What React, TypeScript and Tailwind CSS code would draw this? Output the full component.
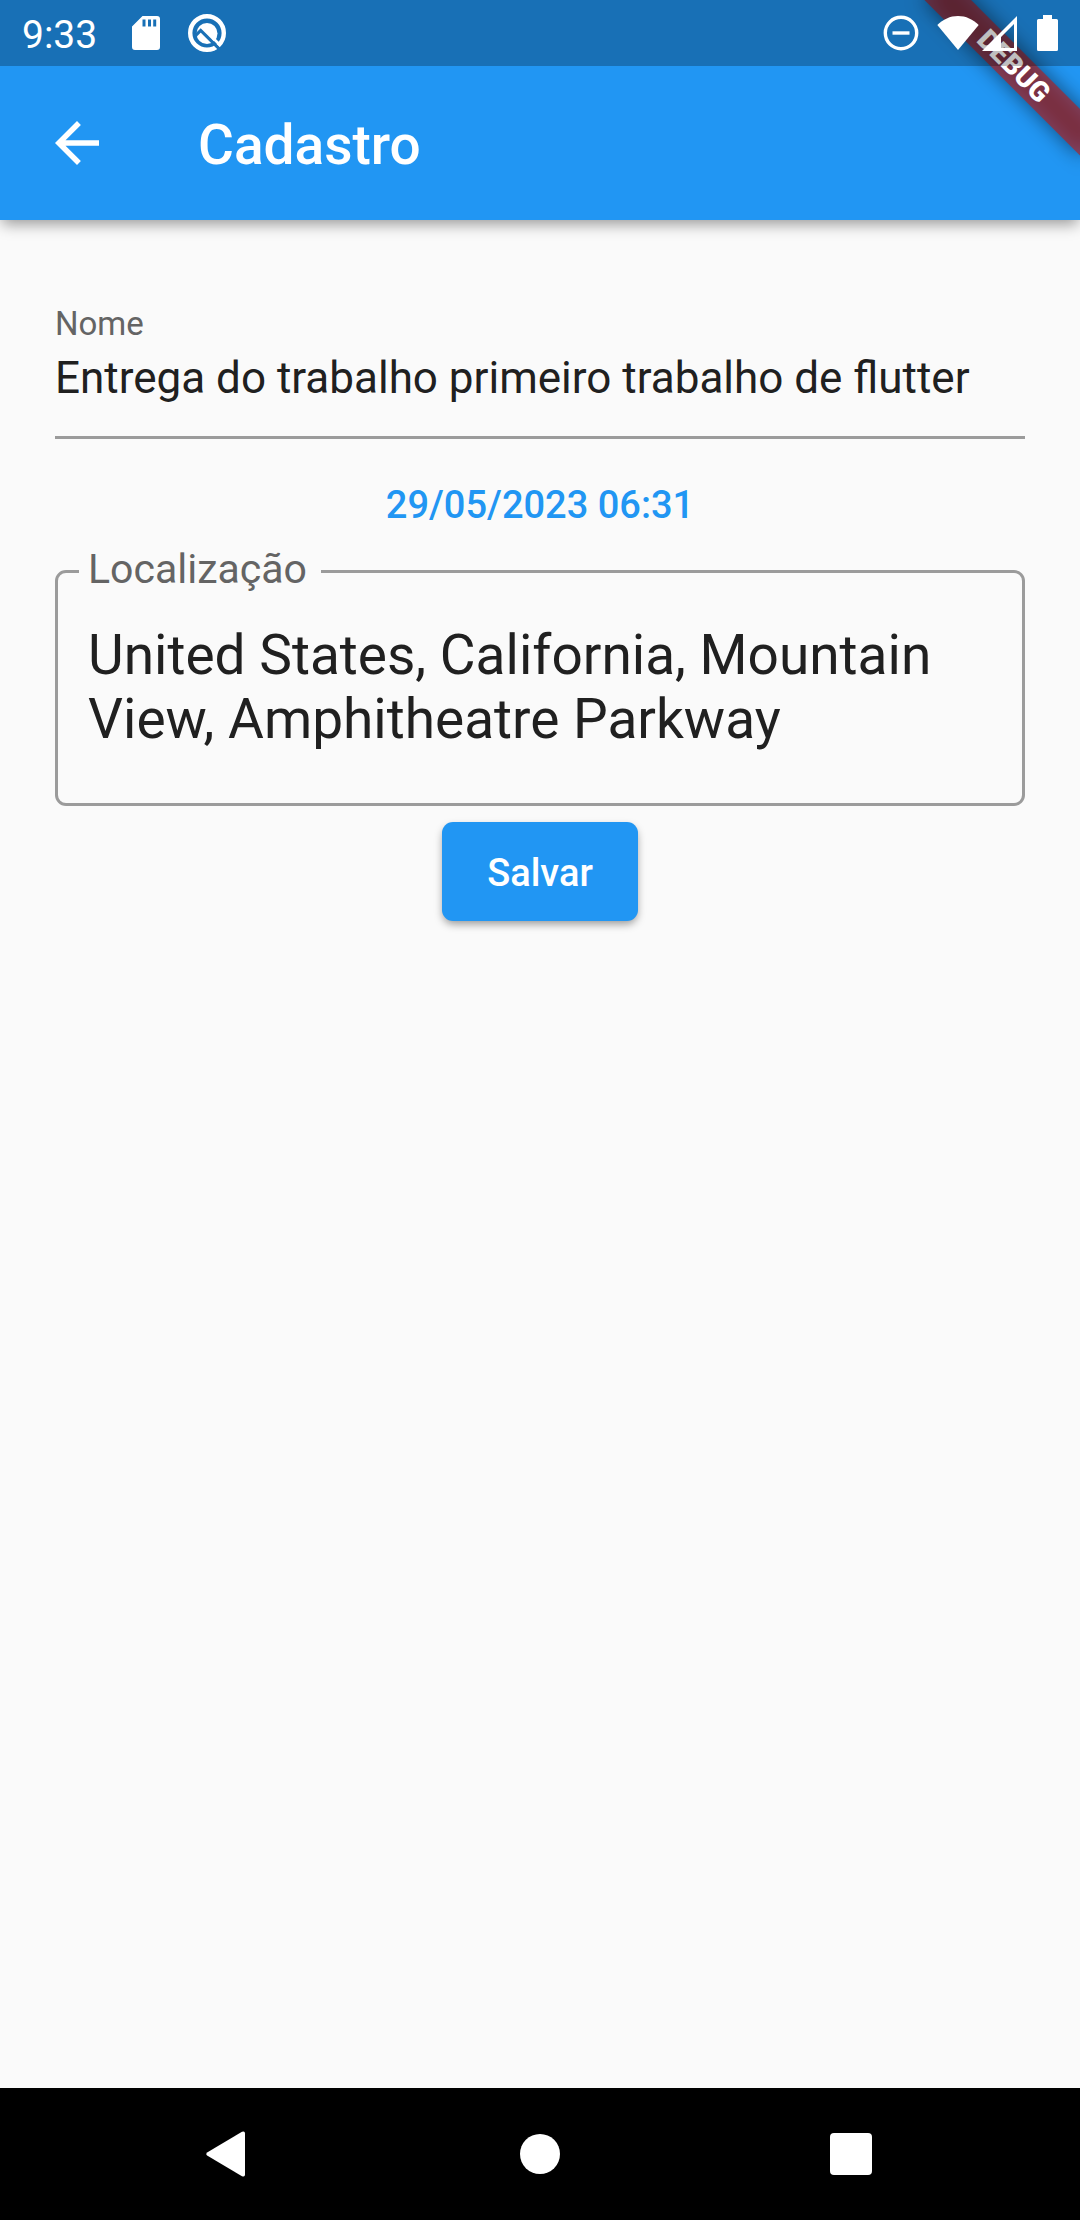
import { useState } from "react";

function SdCardIcon() {
  return (
    <svg viewBox="0 0 28 34" className="h-[34px] w-7" fill="currentColor" aria-hidden="true">
      <path
        fillRule="evenodd"
        d="M10.5 0H25a3 3 0 0 1 3 3v28a3 3 0 0 1-3 3H3a3 3 0 0 1-3-3V10.500ZM10.500 3.500v7h3v-7Zm5.500 0v7h3v-7Zm5.200 0v7h3v-7Z"
      />
    </svg>
  );
}

function AndroidQIcon() {
  return (
    <svg viewBox="0 0 38 38" className="size-[38px]" fill="none" aria-hidden="true">
      <circle cx="19" cy="19" r="16.800" stroke="currentColor" strokeWidth="4.400" />
      <circle cx="19" cy="19.500" r="10.500" fill="currentColor" />
      <path d="M6.500 22.600L12.700 16.400L31 34.700" stroke="#1a70b6" strokeWidth="3.200" />
      <path d="M25 24L32.500 31.500" stroke="currentColor" strokeWidth="2.600" />
    </svg>
  );
}

function DoNotDisturbIcon() {
  return (
    <svg viewBox="0 0 36 36" className="size-9" fill="none" stroke="currentColor" strokeWidth="3.400" aria-hidden="true">
      <circle cx="18" cy="18" r="15.700" />
      <path d="M9.500 18h17" />
    </svg>
  );
}

function WifiIcon() {
  return (
    <svg viewBox="0 0 42 34" className="h-[34px] w-[42px]" fill="currentColor" aria-hidden="true">
      <path d="M21 34L0.300 9C6 3.400 13.200 0 21 0s15 3.400 20.700 9Z" />
    </svg>
  );
}

function SignalIcon() {
  return (
    <svg viewBox="0 0 35 35" className="size-[35px]" fill="currentColor" aria-hidden="true">
      <path fillRule="evenodd" d="M35 0V35H0ZM32 8L19 21V32H32Z" />
    </svg>
  );
}

function BatteryIcon() {
  return (
    <svg viewBox="0 0 21 36" className="h-9 w-[21px]" fill="currentColor" aria-hidden="true">
      <path d="M6 0h9v4h4.500A1.500 1.500 0 0 1 21 5.500v29a1.500 1.500 0 0 1-1.500 1.500h-18A1.500 1.500 0 0 1 0 34.500v-29A1.500 1.500 0 0 1 1.500 4H6Z" />
    </svg>
  );
}

function StatusBar() {
  return (
    <div className="relative z-20 flex h-[66px] items-center justify-between bg-black/25 px-[22px] text-white">
      <div className="flex items-center">
        <time className="pt-[3px] text-[39px] leading-[48px]">9:33</time>
        <span className="ml-[35px]">
          <SdCardIcon />
        </span>
        <span className="ml-7">
          <AndroidQIcon />
        </span>
      </div>
      <div className="flex items-center">
        <DoNotDisturbIcon />
        <span className="ml-[18px]">
          <WifiIcon />
        </span>
        <span className="ml-[3px]">
          <SignalIcon />
        </span>
        <span className="ml-5">
          <BatteryIcon />
        </span>
      </div>
    </div>
  );
}

function DebugBanner() {
  return (
    <div className="pointer-events-none absolute top-0 right-0 z-10 size-60 overflow-hidden">
      <div className="absolute top-0 left-full size-0 origin-top-left rotate-45">
        <div className="absolute top-[77px] left-[-110px] h-[33px] w-[220px] bg-black/50 blur-[10px]" />
        <div className="absolute top-[77px] left-[-110px] flex h-[33px] w-[220px] items-center justify-center bg-[#b71c1c]/63 text-[28px] leading-none font-black text-white">
          DEBUG
        </div>
      </div>
    </div>
  );
}

function AppBar() {
  return (
    <div className="flex h-[154px] items-center px-[44px] text-white">
      <button type="button" aria-label="Voltar" className="flex size-[66px] cursor-pointer items-center justify-center">
        <svg viewBox="0 0 24 24" className="size-[66px]" fill="currentColor" aria-hidden="true">
          <path d="M20 11H7.830l5.590-5.590L12 4l-8 8 8 8 1.410-1.410L7.830 13H20v-2z" />
        </svg>
      </button>
      <h1 className="ml-[88px] pt-1 text-[55px] leading-[64px] font-medium">Cadastro</h1>
    </div>
  );
}

function NavigationBar() {
  return (
    <nav className="flex h-[132px] items-center justify-center gap-[245px] bg-black text-white">
      <button type="button" aria-label="Voltar" className="flex size-[66px] cursor-pointer items-center justify-center">
        <svg viewBox="0 0 66 66" className="size-[66px]" fill="currentColor" aria-hidden="true">
          <path d="M11.500 31.200L46 10.800Q49 9.500 49 12.500V53.500Q49 56.500 46 55.200L11.500 34.800Q9 33 11.500 31.200Z" />
        </svg>
      </button>
      <button type="button" aria-label="Início" className="flex size-[66px] cursor-pointer items-center justify-center">
        <span className="size-10 rounded-full bg-white" />
      </button>
      <button type="button" aria-label="Recentes" className="flex size-[66px] cursor-pointer items-center justify-center">
        <span className="size-[42px] rounded-[4px] bg-white" />
      </button>
    </nav>
  );
}

export default function App() {
  const [name, setName] = useState("Entrega do trabalho primeiro trabalho de flutter");
  const [place, setPlace] = useState("United States, California, Mountain View, Amphitheatre Parkway");

  return (
    <div className="flex min-h-screen flex-col bg-[#fafafa] font-['Roboto',sans-serif] text-[#202020]">
      <header className="relative bg-[#2196f3] shadow-[0_6px_14px_-2px_rgba(0,0,0,0.4)]">
        <StatusBar />
        <AppBar />
        <DebugBanner />
      </header>

      <main className="flex-1 px-[55px] pt-[84px]">
        <form className="flex flex-col" onSubmit={(event) => event.preventDefault()}>
          <label htmlFor="nome" className="text-[33px] leading-[40px] text-[#646464]">
            Nome
          </label>
          <input
            id="nome"
            type="text"
            value={name}
            onChange={(event) => setName(event.target.value)}
            className="mt-2 box-content h-[52px] border-b-[3px] border-[#9b9b9b] pb-8 text-[44px] leading-[52px] outline-none"
          />

          <button type="button" className="h-[132px] cursor-pointer self-center px-6 text-[38px] leading-[46px] font-medium text-[#2196f3]">
            29/05/2023 06:31
          </button>

          <fieldset className="-mt-[26px] min-w-0 rounded-[11px] border-[3px] border-[#9b9b9b] px-[21px] pt-[26px] pb-[52px]">
            <legend className="pr-[14px] pb-1 pl-[9px] text-[41px] leading-[48px] text-[#646464]">
              <label htmlFor="localizacao">Localização</label>
            </legend>
            <textarea
              id="localizacao"
              rows={2}
              value={place}
              onChange={(event) => setPlace(event.target.value)}
              className="block w-full resize-none overflow-hidden px-[9px] text-[55px] leading-[64px] outline-none"
            />
          </fieldset>

          <button
            type="submit"
            className="mt-4 h-[99px] cursor-pointer self-center rounded-[11px] bg-[#2196f3] px-[45px] pt-[3px] text-[38px] leading-[46px] font-medium text-white shadow-[0_4px_8px_-1px_rgba(0,0,0,0.4)]"
          >
            Salvar
          </button>
        </form>
      </main>

      <NavigationBar />
    </div>
  );
}
